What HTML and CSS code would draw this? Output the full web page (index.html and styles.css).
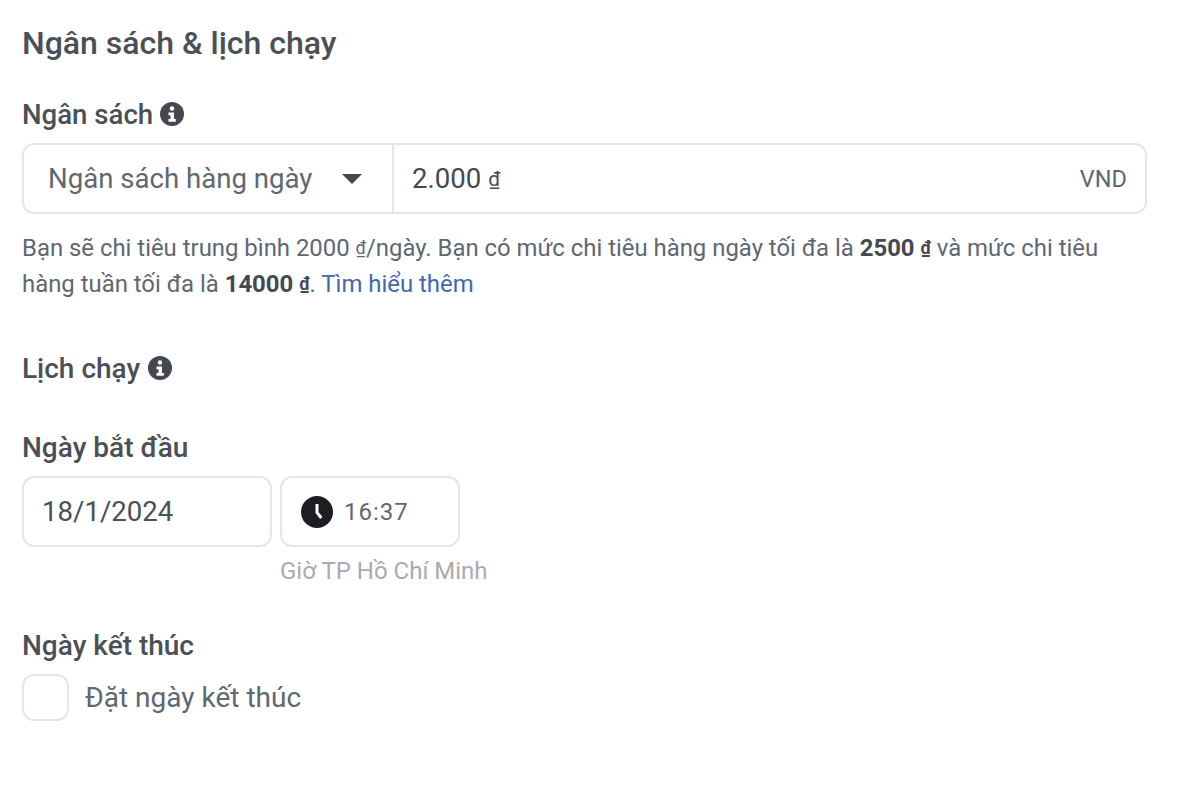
FILE: index.html
```html
<!DOCTYPE html>
<html lang="vi">
<head>
    <meta charset="UTF-8">
    <title>Ngân sách &amp; lịch chạy</title>
    <link rel="stylesheet" href="styles.css">
</head>
<body>
    <div class="container">
        <h1 class="title">Ngân sách &amp; lịch chạy</h1>

        <div class="label budget-label">Ngân sách
            <svg class="info" viewBox="0 0 24 24"><circle cx="12" cy="12" r="12" fill="#444950"/><circle cx="12" cy="6.5" r="2.2" fill="#fff"/><path d="M8.5 10.5h5.5V17h1.8v2.8H8.5V17h2v-3.7h-2z" fill="#fff"/></svg>
        </div>
        <div class="budget-box">
            <div class="budget-type">
                <span>Ngân sách hàng ngày</span>
                <span class="caret"></span>
            </div>
            <div class="budget-value">
                <span class="amount">2.000 <span class="dong">₫</span></span>
                <span class="currency">VND</span>
            </div>
        </div>
        <p class="help">Bạn sẽ chi tiêu trung bình 2000 <span class="dong">₫</span>/ngày. Bạn có mức chi tiêu hàng ngày tối đa là <b>2500 <span class="dong">₫</span></b> và mức chi tiêu hàng tuần tối đa là <b>14000 <span class="dong">₫</span></b>. <a href="#">Tìm hiểu thêm</a></p>

        <div class="label schedule-label">Lịch chạy
            <svg class="info" viewBox="0 0 24 24"><circle cx="12" cy="12" r="12" fill="#444950"/><circle cx="12" cy="6.5" r="2.2" fill="#fff"/><path d="M8.5 10.5h5.5V17h1.8v2.8H8.5V17h2v-3.7h-2z" fill="#fff"/></svg>
        </div>

        <div class="label start-label">Ngày bắt đầu</div>
        <div class="date-row">
            <div class="date-box">18/1/2024</div>
            <div class="time-col">
                <div class="time-box">
                    <svg class="clock" viewBox="0 0 32 32"><circle cx="16" cy="16" r="16" fill="#1c1e21"/><path d="M14.5 8h3v8l4 5-2.4 1.9-4.6-5.9z" fill="#fff"/></svg>
                    <span>16:37</span>
                </div>
                <div class="timezone">Giờ TP Hồ Chí Minh</div>
            </div>
        </div>

        <div class="label end-label">Ngày kết thúc</div>
        <div class="check-row">
            <span class="checkbox"></span>
            <span>Đặt ngày kết thúc</span>
        </div>
    </div>
</body>
</html>
```

FILE: styles.css
```css
* { box-sizing: border-box; }

body {
    margin: 0;
    background: #fff;
    font-family: Roboto, "Liberation Sans", sans-serif;
    color: #4b4f56;
}

.container {
    width: 1147px;
    margin-left: 22px;
    padding-top: 25px;
}

.title {
    margin: 0;
    font-size: 32px;
    line-height: 36px;
    font-weight: 500;
    color: #4b4f56;
}

.label {
    display: flex;
    align-items: center;
    gap: 8px;
    height: 30px;
    font-size: 28px;
    font-weight: 500;
}

.info {
    width: 24px;
    height: 24px;
}

.budget-label {
    margin-top: 38px;
    font-size: 27.6px;
    gap: 7px;
}
.schedule-label { margin-top: 51px; }
.start-label { margin-top: 49px; }
.end-label { margin-top: 45px; }

.budget-box {
    display: flex;
    width: 1125px;
    height: 71px;
    margin-top: 14px;
    border: 2px solid #e4e6e9;
    border-radius: 12px;
}

.budget-type {
    display: flex;
    align-items: center;
    justify-content: space-between;
    width: 370px;
    padding: 0 30px 0 24px;
    border-right: 2px solid #e4e6e9;
    font-size: 27.6px;
    color: #606770;
}

.caret {
    width: 0;
    height: 0;
    border-left: 10px solid transparent;
    border-right: 10px solid transparent;
    border-top: 10px solid #444950;
}

.budget-value {
    flex: 1;
    display: flex;
    align-items: center;
    justify-content: space-between;
    padding: 0 18px;
}

.amount {
    font-size: 27.6px;
    color: #444950;
}

.dong {
    font-size: 0.75em;
    vertical-align: 2px;
}

.currency {
    font-size: 23.5px;
    color: #606770;
}

.help {
    width: 1100px;
    margin: 16px 0 0;
    font-size: 23.9px;
    line-height: 36px;
    color: #606770;
}

.help b {
    font-weight: 700;
    color: #444950;
}

.help a {
    color: #4267b2;
    text-decoration: none;
}

.date-row {
    display: flex;
    gap: 8px;
    margin-top: 14px;
}

.date-box {
    display: flex;
    align-items: center;
    width: 250px;
    height: 71px;
    padding-left: 18px;
    border: 2px solid #e4e6e9;
    border-radius: 12px;
    font-size: 27.6px;
}

.time-box {
    display: flex;
    align-items: center;
    gap: 11px;
    width: 180px;
    height: 71px;
    padding-left: 19px;
    border: 2px solid #e4e6e9;
    border-radius: 12px;
    font-size: 24px;
    letter-spacing: 1px;
    color: #606770;
}

.clock {
    width: 32px;
    height: 32px;
}

.timezone {
    margin-top: 10px;
    font-size: 24px;
    line-height: 28px;
    color: #a8abaf;
    white-space: nowrap;
}

.check-row {
    display: flex;
    align-items: center;
    gap: 16px;
    margin-top: 14px;
    font-size: 28px;
    color: #606770;
}

.checkbox {
    width: 47px;
    height: 47px;
    border: 2px solid #e4e6e9;
    border-radius: 12px;
}
```
